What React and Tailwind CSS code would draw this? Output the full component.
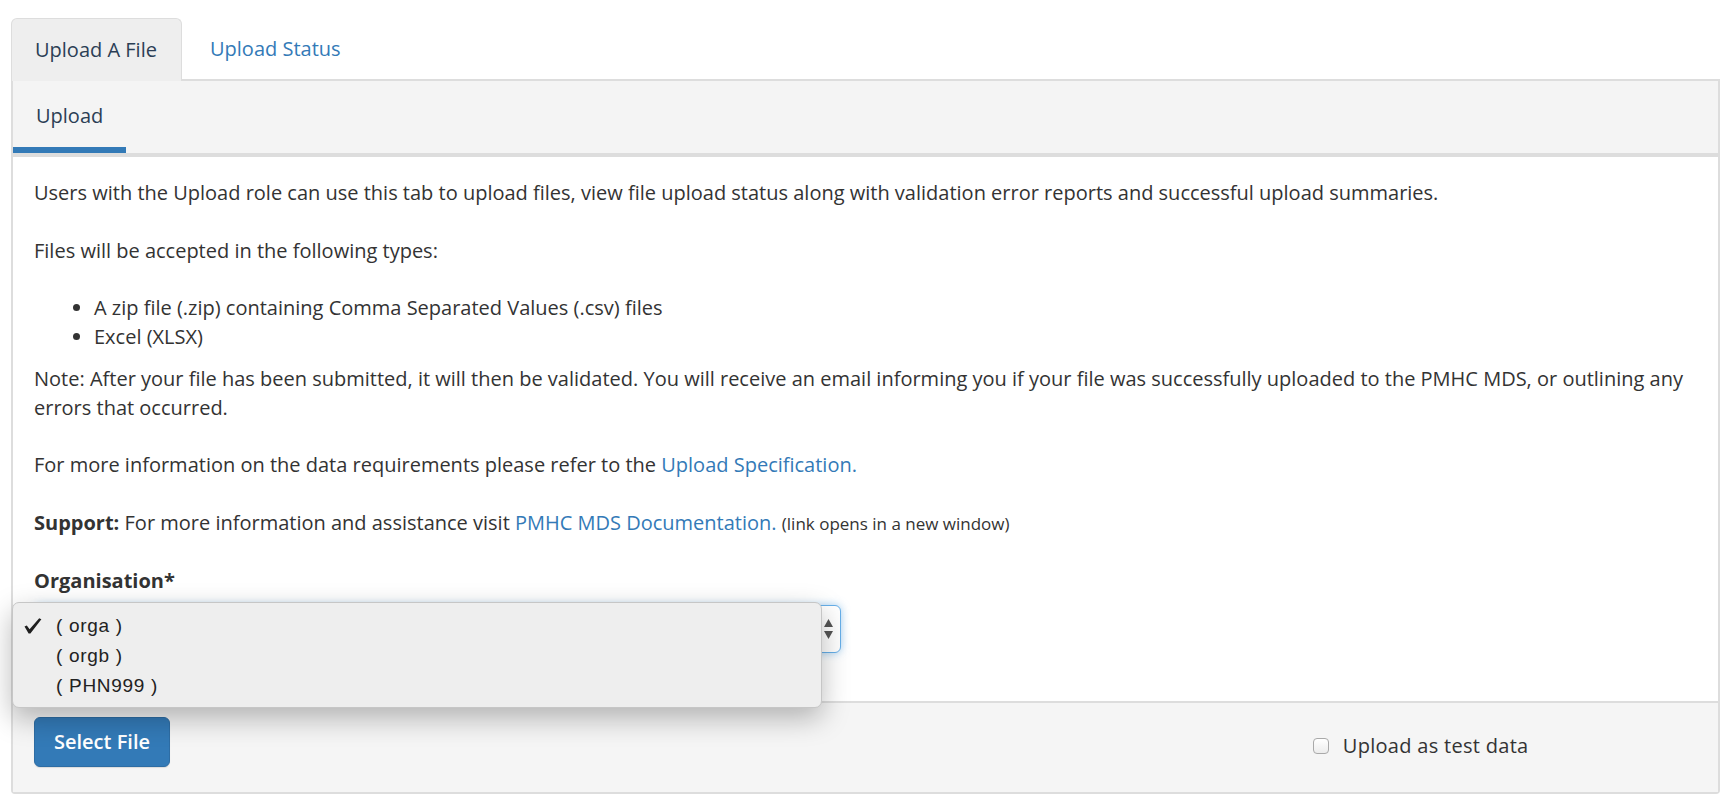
import React from 'react';

const orgs = ['( orga )', '( orgb )', '( PHN999 )'];

const CheckMark = () => (
  <svg width="18" height="16" viewBox="0 0 18 16" className="text-[#1f1f1f]">
    <path d="M0.5 8.6 L2.8 7.4 L5.6 11.2 L15.2 0.3 L17.4 1.2 L6.4 15.6 L4.6 15.6 Z" fill="currentColor" />
  </svg>
);

const OrgMenu = () => (
  <div className="absolute left-[-22px] top-[-3px] w-[810px] h-[106px] rounded-[7px] border border-[#c6c6c6] bg-[#eeeeee] pt-[8px] shadow-[0_10px_28px_rgba(0,0,0,0.28)] font-['Liberation_Sans',sans-serif] text-[19px] tracking-[0.7px] text-[#222]">
    {orgs.map((org, i) => (
      <div key={org} className="flex items-center h-[30px]">
        <span className="flex w-[43px] pl-[11px]">{i === 0 && <CheckMark />}</span>
        <span>{org}</span>
      </div>
    ))}
  </div>
);

const SelectArrows = () => (
  <svg width="9" height="20" viewBox="0 0 9 20" className="text-[#555]">
    <path d="M4.5 0 L9 8 L0 8 Z" fill="currentColor" />
    <path d="M0 12 L9 12 L4.5 20 Z" fill="currentColor" />
  </svg>
);

export default function App() {
  return (
    <div className="min-h-[806px] bg-white pt-[18px] pl-[11px] pr-[12px] font-['Open_Sans',sans-serif] text-[20px] leading-[28.57px] text-[#333]">
      {/* tabs */}
      <div className="flex items-end">
        <div className="relative z-10 -mb-[2px] h-[63px] w-[171px] rounded-t-[6px] border border-b-0 border-[#ddd] bg-[#eeeeee] pl-[23px] pt-[17px] text-[#2b3e55]">
          Upload A File
        </div>
        <div className="h-[61px] pl-[28px] pt-[17px] text-[#337ab7]">Upload Status</div>
      </div>

      {/* panel */}
      <div className="border-2 border-[#ddd] rounded-b-[4px]">
        <div className="flex h-[76px] border-b-4 border-[#ddd] bg-[#f4f4f4]">
          <div className="h-[72px] border-b-[6px] border-[#337ab7] px-[23px] pt-[21px] text-[#2b3e55]">
            Upload
          </div>
        </div>

        <div className="px-[21px] pt-[22px] pb-[48px]">
          <p className="mb-[29px]">
            Users with the Upload role can use this tab to upload files, view file upload status along with validation error reports and successful upload summaries.
          </p>
          <p className="mb-[29px]">Files will be accepted in the following types:</p>
          <ul className="mb-[14px] list-disc pl-[60px]">
            <li>A zip file (.zip) containing Comma Separated Values (.csv) files</li>
            <li>Excel (XLSX)</li>
          </ul>
          <p className="mb-[29px]">
            Note: After your file has been submitted, it will then be validated. You will receive an email informing you if your file was successfully uploaded to the PMHC MDS, or outlining any errors that occurred.
          </p>
          <p className="mb-[29px]">
            For more information on the data requirements please refer to the{' '}
            <a className="text-[#337ab7]">Upload Specification.</a>
          </p>
          <p className="mb-[28px]">
            <strong className="font-bold">Support:</strong> For more information and assistance visit{' '}
            <a className="text-[#337ab7]">PMHC MDS Documentation.</a>{' '}
            <small className="text-[17px]">(link opens in a new window)</small>
          </p>

          <label className="block mb-[10px] font-bold">Organisation*</label>
          <div className="relative w-[807px]">
            <div className="flex h-[48px] items-center justify-end rounded-[6px] border border-[#66afe9] bg-white pr-[7px] shadow-[0_0_8px_rgba(102,175,233,0.6)]">
              <SelectArrows />
            </div>
            <OrgMenu />
          </div>
        </div>

        {/* footer */}
        <div className="flex border-t-2 border-[#ddd] bg-[#f5f5f5] pt-[14px] pb-[16px]">
          <div className="w-3/4 px-[21px]">
            <button className="h-[50px] w-[136px] rounded-[6px] border border-[#2e6da4] bg-[#337ab7] font-semibold text-white shadow-[0_1px_1px_rgba(0,0,0,0.1)]">
              Select File
            </button>
          </div>
          <div className="w-1/4 px-[21px] py-[15px]">
            <label className="flex items-center gap-[14px]">
              <span className="inline-block h-[16px] w-[16px] rounded-[4px] border border-[#a9a9a9] bg-gradient-to-b from-white to-[#ececec]" />
              <span className="tracking-[0.3px]">Upload as test data</span>
            </label>
          </div>
        </div>
      </div>
    </div>
  );
}
